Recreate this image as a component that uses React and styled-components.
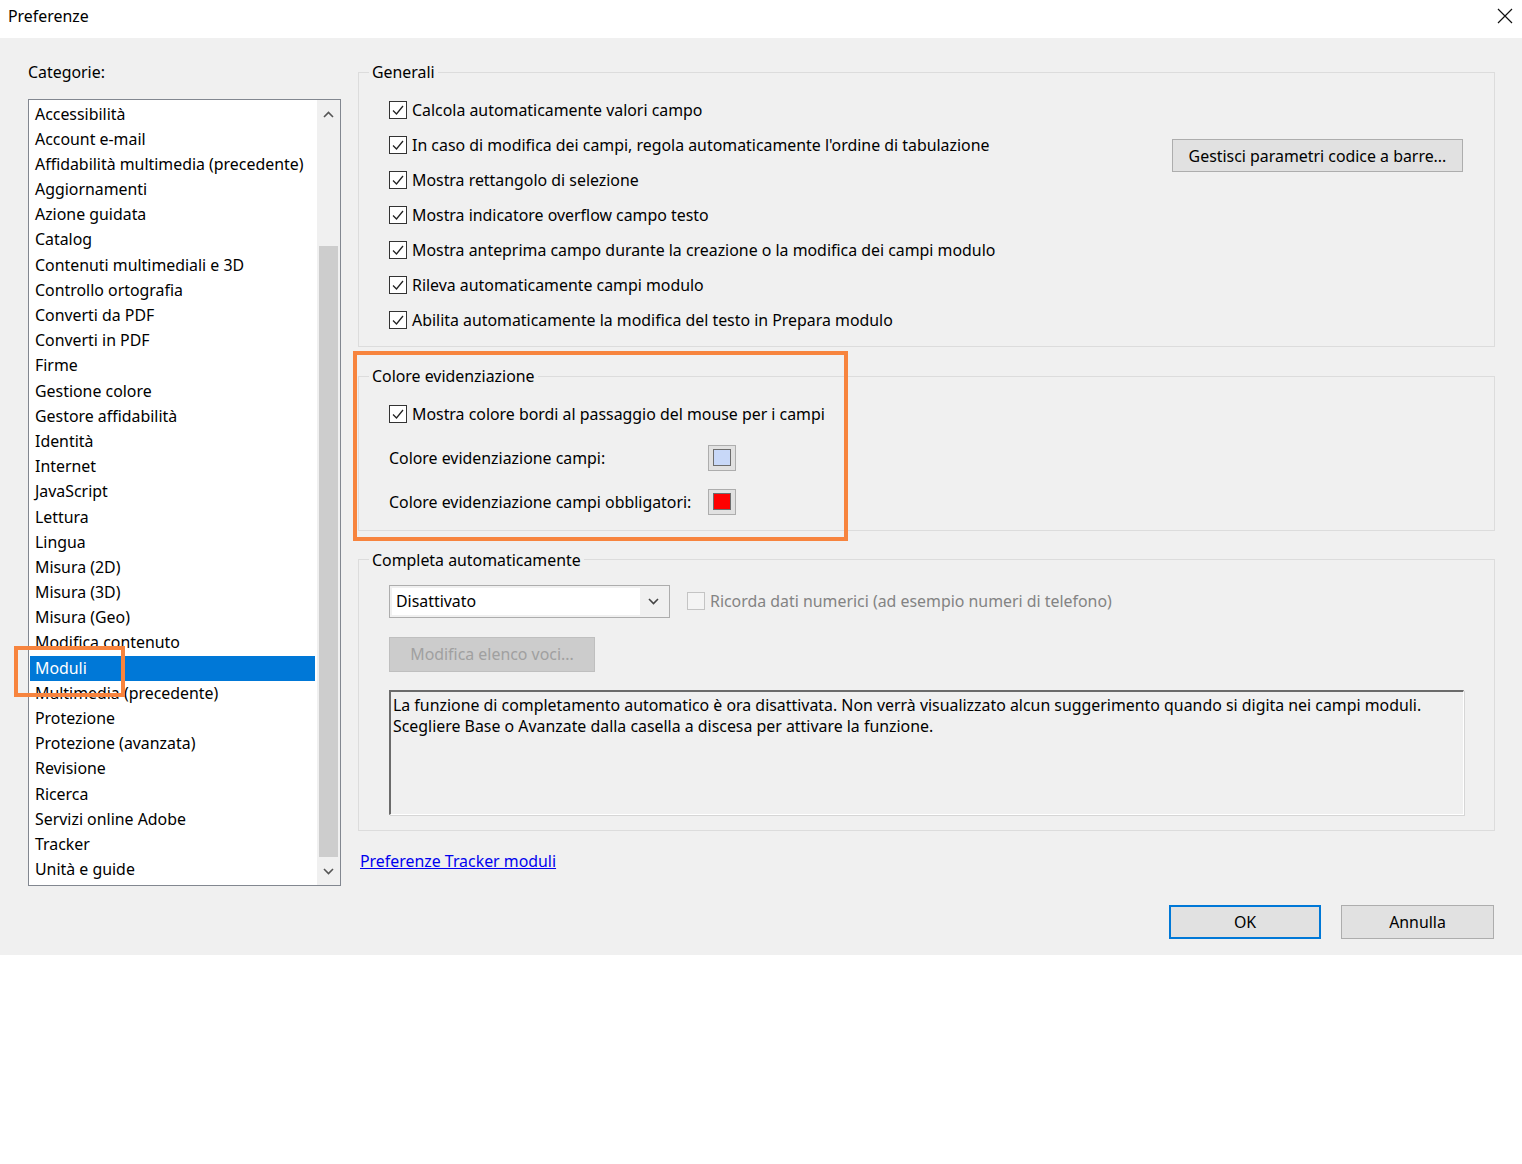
import React from "react";
import styled, { createGlobalStyle } from "styled-components";

const GlobalStyle = createGlobalStyle`
  body {
    margin: 0;
    background: #ffffff;
    font-family: "Noto Sans", "Open Sans", sans-serif;
    font-size: 15.9px;
    color: #000;
  }
  * { box-sizing: border-box; }
`;

const categories = [
  "Accessibilità",
  "Account e-mail",
  "Affidabilità multimedia (precedente)",
  "Aggiornamenti",
  "Azione guidata",
  "Catalog",
  "Contenuti multimediali e 3D",
  "Controllo ortografia",
  "Converti da PDF",
  "Converti in PDF",
  "Firme",
  "Gestione colore",
  "Gestore affidabilità",
  "Identità",
  "Internet",
  "JavaScript",
  "Lettura",
  "Lingua",
  "Misura (2D)",
  "Misura (3D)",
  "Misura (Geo)",
  "Modifica contenuto",
  "Moduli",
  "Multimedia (precedente)",
  "Protezione",
  "Protezione (avanzata)",
  "Revisione",
  "Ricerca",
  "Servizi online Adobe",
  "Tracker",
  "Unità e guide",
];

const generalOptions = [
  "Calcola automaticamente valori campo",
  "In caso di modifica dei campi, regola automaticamente l'ordine di tabulazione",
  "Mostra rettangolo di selezione",
  "Mostra indicatore overflow campo testo",
  "Mostra anteprima campo durante la creazione o la modifica dei campi modulo",
  "Rileva automaticamente campi modulo",
  "Abilita automaticamente la modifica del testo in Prepara modulo",
];

const Window = styled.div`
  position: relative;
  width: 1522px;
`;

const TitleBar = styled.div`
  height: 38px;
  display: flex;
  justify-content: space-between;
  align-items: flex-start;
  padding: 5px 9px 0 8px;
  background: #fff;
  line-height: 22px;
`;

const CloseButton = styled.div`
  width: 16px;
  height: 22px;
  display: flex;
  align-items: center;
  justify-content: center;
`;

const Body = styled.div`
  height: 917px;
  background: #f0f0f0;
  display: grid;
  grid-template-columns: 313px 1137px;
  column-gap: 17px;
  padding: 23px 0 0 28px;
  align-items: start;
`;

const LeftColumn = styled.div`
  display: flex;
  flex-direction: column;
`;

const Label = styled.div`
  line-height: 22px;
`;

const ListBox = styled.div`
  margin-top: 16px;
  height: 787px;
  border: 1px solid #828790;
  background: #fff;
  display: flex;
`;

const Items = styled.div`
  flex: 1;
  padding-top: 1.5px;
  display: flex;
  flex-direction: column;
`;

const Item = styled.div`
  height: 25.2px;
  line-height: 25.2px;
  margin: 0 2px 0 1px;
  padding-left: 5px;
  white-space: nowrap;
  background: ${(p) => (p.$selected ? "#0078d7" : "transparent")};
  color: ${(p) => (p.$selected ? "#fff" : "#000")};
`;

const ScrollBar = styled.div`
  width: 23px;
  background: #f0f0f0;
  display: flex;
  flex-direction: column;
  align-items: stretch;
`;

const ScrollArrow = styled.div`
  height: 28px;
  display: flex;
  align-items: center;
  justify-content: center;
`;

const ScrollSpacer = styled.div`
  height: 118px;
`;

const Thumb = styled.div`
  flex: 1;
  margin: 0 2px;
  background: #cdcdcd;
`;

const RightColumn = styled.div`
  display: flex;
  flex-direction: column;
`;

const Group = styled.fieldset`
  margin: ${(p) => p.$gap || 0}px 0 0 0;
  padding: 0;
  min-width: 0;
  border: 1px solid #dcdcdc;
`;

const Legend = styled.legend`
  margin-left: 10px;
  padding: 0 3px;
  line-height: 22px;
`;

const GroupContent = styled.div`
  padding: ${(p) => p.$pad};
`;

const GeneralLayout = styled.div`
  display: flex;
  justify-content: space-between;
  align-items: flex-start;
`;

const Column = styled.div`
  display: flex;
  flex-direction: column;
`;

const CheckRow = styled.label`
  height: 35px;
  display: flex;
  align-items: center;
  gap: 5px;
  white-space: nowrap;
  color: ${(p) => (p.$disabled ? "#838383" : "#000")};
`;

const Box = styled.span`
  width: 18px;
  height: 18px;
  flex: none;
  border: 1px solid ${(p) => (p.$disabled ? "#c4c4c4" : "#333")};
  background: ${(p) => (p.$disabled ? "#f4f4f4" : "#fff")};
  display: flex;
  align-items: center;
  justify-content: center;
`;

const Button = styled.div`
  width: ${(p) => p.$w}px;
  height: ${(p) => p.$h || 34}px;
  margin-top: ${(p) => p.$top || 0}px;
  display: flex;
  align-items: center;
  justify-content: center;
  background: ${(p) => (p.$disabled ? "#cccccc" : "#e1e1e1")};
  border: ${(p) =>
    p.$default ? "2px solid #0078d7" : p.$disabled ? "1px solid #bfbfbf" : "1px solid #adadad"};
  color: ${(p) => (p.$disabled ? "#a0a0a0" : "#000")};
  white-space: nowrap;
`;

const ColorGrid = styled.div`
  margin-top: 4.5px;
  display: grid;
  grid-template-columns: 319px 28px;
  grid-auto-rows: 44px;
  align-items: center;
`;

const Swatch = styled.div`
  width: 28px;
  height: 26px;
  border: 1px solid #adadad;
  background: #e1e1e1;
  display: flex;
  align-items: center;
  justify-content: center;
`;

const SwatchColor = styled.div`
  width: 18px;
  height: 17px;
  border: 1px solid #6d6d6d;
  background: ${(p) => p.$color};
`;

const SelectRow = styled.div`
  display: flex;
  align-items: center;
  gap: 17px;
`;

const Select = styled.div`
  width: 281px;
  height: 33px;
  border: 1px solid #adadad;
  background: #f0f0f0;
  display: flex;
  padding: 2px;
`;

const SelectValue = styled.div`
  flex: 1;
  background: #fff;
  padding-left: 4px;
  line-height: 27px;
`;

const SelectArrow = styled.div`
  width: 27px;
  display: flex;
  align-items: center;
  justify-content: center;
`;

const InfoBox = styled.div`
  margin-top: 18px;
  width: 1075px;
  height: 125px;
  border-top: 2px solid #6b6b6b;
  border-left: 2px solid #6b6b6b;
  border-right: 1px solid #fff;
  border-bottom: 1px solid #fff;
  box-shadow: 1px 1px 0 #d6d6d6;
  padding: 3px 0 0 2px;
  line-height: 21px;
  color: #000;
`;

const Link = styled.a`
  margin-top: 20px;
  margin-left: 2px;
  line-height: 20px;
  color: #0000ee;
  text-decoration: underline;
  align-self: flex-start;
  cursor: pointer;
`;

const Footer = styled.div`
  margin-top: 34px;
  margin-right: 1px;
  display: flex;
  justify-content: flex-end;
  gap: 20px;
`;

const Highlight = styled.div`
  position: absolute;
  left: ${(p) => p.$x}px;
  top: ${(p) => p.$y}px;
  width: ${(p) => p.$w}px;
  height: ${(p) => p.$h}px;
  border: 4px solid #f7843e;
  pointer-events: none;
`;

const CheckMark = () => (
  <svg width="14" height="14" viewBox="0 0 14 14">
    <polyline points="2,7.5 5.5,11 12,3" fill="none" stroke="#222" strokeWidth="1.3" />
  </svg>
);

const Checkbox = ({ checked = true, disabled, children }) => (
  <CheckRow $disabled={disabled}>
    <Box $disabled={disabled}>{checked && <CheckMark />}</Box>
    {children}
  </CheckRow>
);

const Chevron = ({ up, color = "#444" }) => (
  <svg width="11" height="7" viewBox="0 0 11 7">
    <polyline
      points={up ? "1,6 5.5,1.5 10,6" : "1,1 5.5,5.5 10,1"}
      fill="none"
      stroke={color}
      strokeWidth="1.6"
    />
  </svg>
);

const App = () => {
  return (
    <Window>
      <GlobalStyle />
      <TitleBar>
        <span>Preferenze</span>
        <CloseButton>
          <svg width="16" height="16" viewBox="0 0 16 16">
            <path d="M1 1 L15 15 M15 1 L1 15" stroke="#111" strokeWidth="1.2" />
          </svg>
        </CloseButton>
      </TitleBar>
      <Body>
        <LeftColumn>
          <Label>Categorie:</Label>
          <ListBox>
            <Items>
              {categories.map((c) => (
                <Item key={c} $selected={c === "Moduli"}>
                  {c}
                </Item>
              ))}
            </Items>
            <ScrollBar>
              <ScrollArrow>
                <Chevron up color="#555" />
              </ScrollArrow>
              <ScrollSpacer />
              <Thumb />
              <ScrollArrow>
                <Chevron color="#555" />
              </ScrollArrow>
            </ScrollBar>
          </ListBox>
        </LeftColumn>

        <RightColumn>
          <Group>
            <Legend>Generali</Legend>
            <GroupContent $pad="9px 31px 9px 30px">
              <GeneralLayout>
                <Column>
                  {generalOptions.map((o) => (
                    <Checkbox key={o}>{o}</Checkbox>
                  ))}
                </Column>
                <Button $w={291} $h={33} $top={47}>
                  Gestisci parametri codice a barre...
                </Button>
              </GeneralLayout>
            </GroupContent>
          </Group>

          <Group $gap={18}>
            <Legend>Colore evidenziazione</Legend>
            <GroupContent $pad="9px 31px 6px 30px">
              <Checkbox>Mostra colore bordi al passaggio del mouse per i campi</Checkbox>
              <ColorGrid>
                <span>Colore evidenziazione campi:</span>
                <Swatch>
                  <SwatchColor $color="#c8d8f8" />
                </Swatch>
                <span>Colore evidenziazione campi obbligatori:</span>
                <Swatch>
                  <SwatchColor $color="#ff0000" />
                </Swatch>
              </ColorGrid>
            </GroupContent>
          </Group>

          <Group $gap={18}>
            <Legend>Completa automaticamente</Legend>
            <GroupContent $pad="13px 31px 15px 30px">
              <SelectRow>
                <Select>
                  <SelectValue>Disattivato</SelectValue>
                  <SelectArrow>
                    <Chevron />
                  </SelectArrow>
                </Select>
                <Checkbox checked={false} disabled>
                  Ricorda dati numerici (ad esempio numeri di telefono)
                </Checkbox>
              </SelectRow>
              <Button $w={206} $h={35} $top={18} $disabled>
                Modifica elenco voci...
              </Button>
              <InfoBox>
                La funzione di completamento automatico è ora disattivata. Non verrà visualizzato
                alcun suggerimento quando si digita nei campi moduli.
                <br />
                Scegliere Base o Avanzate dalla casella a discesa per attivare la funzione.
              </InfoBox>
            </GroupContent>
          </Group>

          <Link>Preferenze Tracker moduli</Link>

          <Footer>
            <Button $w={152} $h={34} $default>
              OK
            </Button>
            <Button $w={153} $h={34}>
              Annulla
            </Button>
          </Footer>
        </RightColumn>
      </Body>

      <Highlight $x={14} $y={646} $w={111} $h={51} />
      <Highlight $x={353} $y={351} $w={495} $h={190} />
    </Window>
  );
};

export default App;
